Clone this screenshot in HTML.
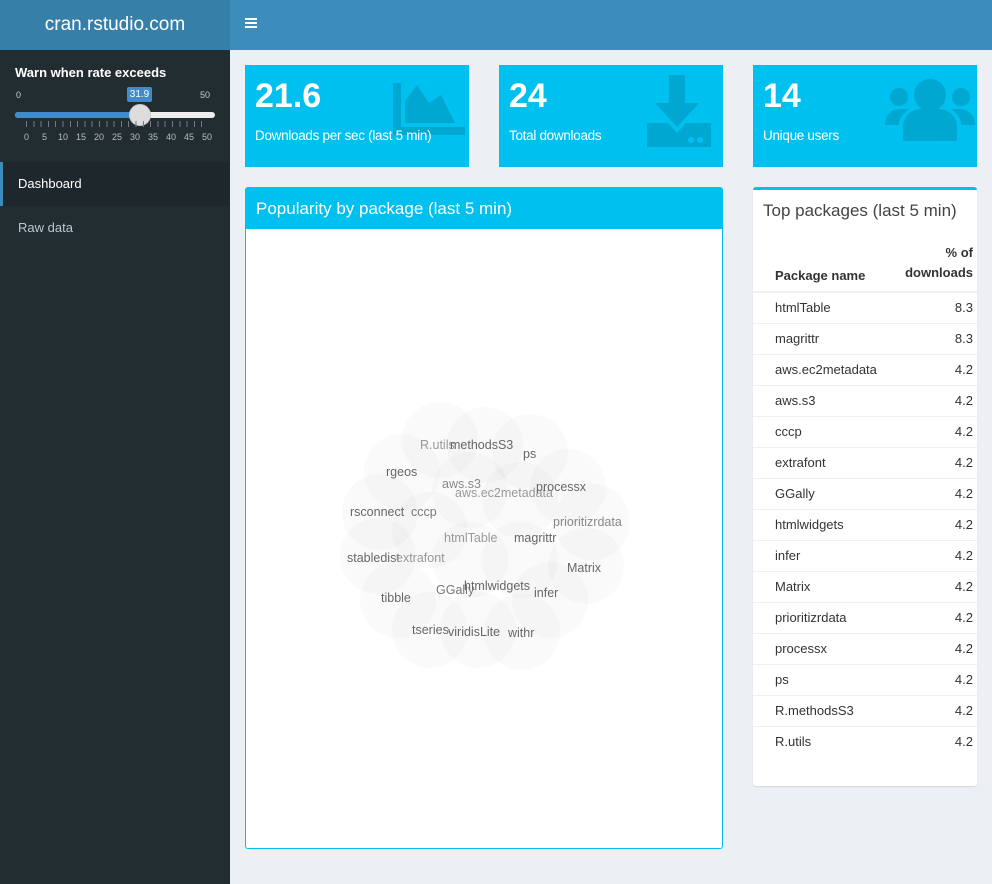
<!DOCTYPE html>
<html><head><meta charset="utf-8"><style>
*{box-sizing:border-box;margin:0;padding:0}
body{width:992px;height:884px;overflow:hidden;background:#ecf0f5;font-family:"Liberation Sans",sans-serif;position:relative}
.logo{position:absolute;left:0;top:0;width:230px;height:50px;background:#367fa9;color:#fff;font-size:19px;text-align:center;line-height:50px;font-weight:300}
.nav{position:absolute;left:230px;top:0;right:0;height:50px;background:#3c8dbc}
.side{position:absolute;left:0;top:50px;width:230px;bottom:0;background:#222d32}
.ib{position:absolute;top:65px;height:102px;background:#00c0ef;color:#fff}
.ib .n{position:absolute;left:10px;top:12px;font-size:34px;font-weight:bold}
.ib .t{position:absolute;left:10px;top:63px;font-size:13.5px;letter-spacing:-0.3px;z-index:2}
.ib svg{position:absolute}
.box{position:absolute;background:#fff;border-radius:3px}
table{border-collapse:collapse;width:100%;font-size:13px;color:#333}
td{height:31px;border-top:1px solid #f0f0f0;padding:0 4px 0 22px}
td.r{text-align:right;padding-right:4px}
</style></head><body>
<div class="logo">cran.rstudio.com</div>
<div class="nav"><div style="position:absolute;left:15px;top:18px;width:12px;height:2px;background:#fff;box-shadow:0 4px #fff,0 8px #fff"></div></div>
<div class="side">
<div style="position:absolute;left:15px;top:15px;color:#fff;font-weight:bold;font-size:13px">Warn when rate exceeds</div>
<div style="position:absolute;left:16px;top:40px;color:#ccc;font-size:9px">0</div>
<div style="position:absolute;left:200px;top:40px;color:#ccc;font-size:9px">50</div>
<div style="position:absolute;left:127px;top:37px;width:25px;height:15px;background:#428bca;color:#fff;font-size:10px;text-align:center;line-height:15px;border-radius:2px">31.9</div>
<div style="position:absolute;left:15px;top:62px;width:200px;height:6px;background:#eee;border-radius:3px"></div>
<div style="position:absolute;left:15px;top:62px;width:125px;height:6px;background:#428bca;border-radius:3px"></div>
<div style="position:absolute;left:129px;top:54px;width:22px;height:22px;background:#ddd;border-radius:50%;border:1px solid #ccc"></div>
<div style="position:absolute;top:71px;height:6px;background:repeating-linear-gradient(90deg,#778 0 1px,transparent 1px 7.3px);left:26px;width:182px"></div>
<div style="position:absolute;left:20px;top:82px;width:195px;color:#bbb;font-size:9px">
<span style="position:absolute;left:4px">0</span><span style="position:absolute;left:22px">5</span><span style="position:absolute;left:38px">10</span><span style="position:absolute;left:56px">15</span><span style="position:absolute;left:74px">20</span><span style="position:absolute;left:92px">25</span><span style="position:absolute;left:110px">30</span><span style="position:absolute;left:128px">35</span><span style="position:absolute;left:146px">40</span><span style="position:absolute;left:164px">45</span><span style="position:absolute;left:182px">50</span></div>
<div style="position:absolute;left:0;top:112px;width:230px;height:44px;background:#1e282c;border-left:3px solid #3c8dbc;color:#fff;font-size:13px;line-height:44px;padding-left:15px">Dashboard</div>
<div style="position:absolute;left:18px;top:170px;color:#b8c7ce;font-size:13px">Raw data</div>
</div>

<div class="ib" style="left:245px;width:224px"><div class="n">21.6</div><div class="t">Downloads per sec (last 5 min)</div>
<svg style="left:148px;top:18px" width="72" height="56" viewBox="0 0 72 56"><path fill="#00a7d0" d="M0 0h8v44h64v8H0z M12 40V18L24 2l12 18 12-8 14 28z"/></svg></div>
<div class="ib" style="left:499px;width:224px"><div class="n">24</div><div class="t">Total downloads</div>
<svg style="left:148px;top:10px" width="64" height="72" viewBox="0 0 64 72"><path fill="#00a7d0" d="M22 0h16v28h14L30 52 8 28h14z M0 48h21l9 10 9-10h25v24H0z"/><circle cx="44" cy="65" r="3" fill="#00c0ef"/><circle cx="53" cy="65" r="3" fill="#00c0ef"/></svg></div>
<div class="ib" style="left:753px;width:224px"><div class="n">14</div><div class="t">Unique users</div>
<svg style="left:132px;top:14px" width="90" height="62" viewBox="0 0 90 62"><g fill="#00a7d0"><ellipse cx="45" cy="16" rx="16" ry="16"/><circle cx="14" cy="18" r="9"/><circle cx="76" cy="18" r="9"/><path d="M18 62V48c0-10 8-18 18-18h18c10 0 18 8 18 18v14z M0 46c0-10 6-16 16-16h8c-8 6-10 10-10 16z M90 46c0-10-6-16-16-16h-8c8 6 10 10 10 16z"/></g></svg></div>

<div class="box" style="left:245px;top:187px;width:478px;height:662px;border:1px solid #00c0ef">
<div style="height:41px;background:#00c0ef;color:#fff;font-size:17px;line-height:41px;padding-left:10px">Popularity by package (last 5 min)</div>
<svg style="position:absolute;left:-1px;top:-1px" width="478" height="662"><g transform="translate(-245,-187)">
<g fill="rgba(0,0,0,0.018)">
<circle cx="440" cy="440" r="38"/><circle cx="485" cy="445" r="38"/><circle cx="530" cy="452" r="38"/><circle cx="402" cy="472" r="38"/><circle cx="568" cy="487" r="38"/><circle cx="380" cy="512" r="38"/><circle cx="592" cy="522" r="38"/><circle cx="378" cy="556" r="38"/><circle cx="586" cy="566" r="38"/><circle cx="398" cy="600" r="38"/><circle cx="550" cy="600" r="38"/><circle cx="430" cy="630" r="38"/><circle cx="478" cy="630" r="38"/><circle cx="522" cy="632" r="38"/><circle cx="470" cy="490" r="38"/><circle cx="520" cy="500" r="38"/><circle cx="470" cy="560" r="38"/><circle cx="520" cy="560" r="38"/><circle cx="430" cy="530" r="38"/>
</g>
<g font-family="Liberation Sans,sans-serif" font-size="12.5" fill="#666">
<text x="420" y="449" fill="#999">R.utils</text><text x="450" y="449">methodsS3</text><text x="523" y="458">ps</text><text x="386" y="476">rgeos</text><text x="442" y="488" fill="#888">aws.s3</text><text x="455" y="497" fill="#999">aws.ec2metadata</text><text x="536" y="491">processx</text><text x="350" y="516">rsconnect</text><text x="411" y="516" fill="#777">cccp</text><text x="553" y="526" fill="#888">prioritizrdata</text><text x="444" y="542" fill="#999">htmlTable</text><text x="514" y="542">magrittr</text><text x="347" y="562">stabledist</text><text x="396" y="562" fill="#999">extrafont</text><text x="567" y="572">Matrix</text><text x="436" y="594" fill="#777">GGally</text><text x="464" y="590">htmlwidgets</text><text x="534" y="597">infer</text><text x="381" y="602">tibble</text><text x="412" y="634">tseries</text><text x="448" y="636">viridisLite</text><text x="508" y="637">withr</text>
</g></g></svg>
</div>

<div class="box" style="left:753px;top:187px;width:224px;height:599px;border-top:3px solid #00c0ef;box-shadow:0 1px 1px rgba(0,0,0,.1)">
<div style="position:absolute;left:10px;top:11px;font-size:17px;color:#444">Top packages (last 5 min)</div>
<div style="position:absolute;left:0;top:50px;width:224px">
<table><tr style="font-weight:bold"><td style="border:0;height:52px;vertical-align:bottom;padding-bottom:8px">Package name</td><td class="r" style="border:0;vertical-align:bottom;padding-bottom:8px;line-height:20px">% of<br>downloads</td></tr>
<tr><td style="border-top:2px solid #f0f0f0">htmlTable</td><td class="r" style="border-top:2px solid #f0f0f0">8.3</td></tr>
<tr><td>magrittr</td><td class="r">8.3</td></tr>
<tr><td>aws.ec2metadata</td><td class="r">4.2</td></tr>
<tr><td>aws.s3</td><td class="r">4.2</td></tr>
<tr><td>cccp</td><td class="r">4.2</td></tr>
<tr><td>extrafont</td><td class="r">4.2</td></tr>
<tr><td>GGally</td><td class="r">4.2</td></tr>
<tr><td>htmlwidgets</td><td class="r">4.2</td></tr>
<tr><td>infer</td><td class="r">4.2</td></tr>
<tr><td>Matrix</td><td class="r">4.2</td></tr>
<tr><td>prioritizrdata</td><td class="r">4.2</td></tr>
<tr><td>processx</td><td class="r">4.2</td></tr>
<tr><td>ps</td><td class="r">4.2</td></tr>
<tr><td>R.methodsS3</td><td class="r">4.2</td></tr>
<tr><td>R.utils</td><td class="r">4.2</td></tr>
</table></div></div>
</body></html>
